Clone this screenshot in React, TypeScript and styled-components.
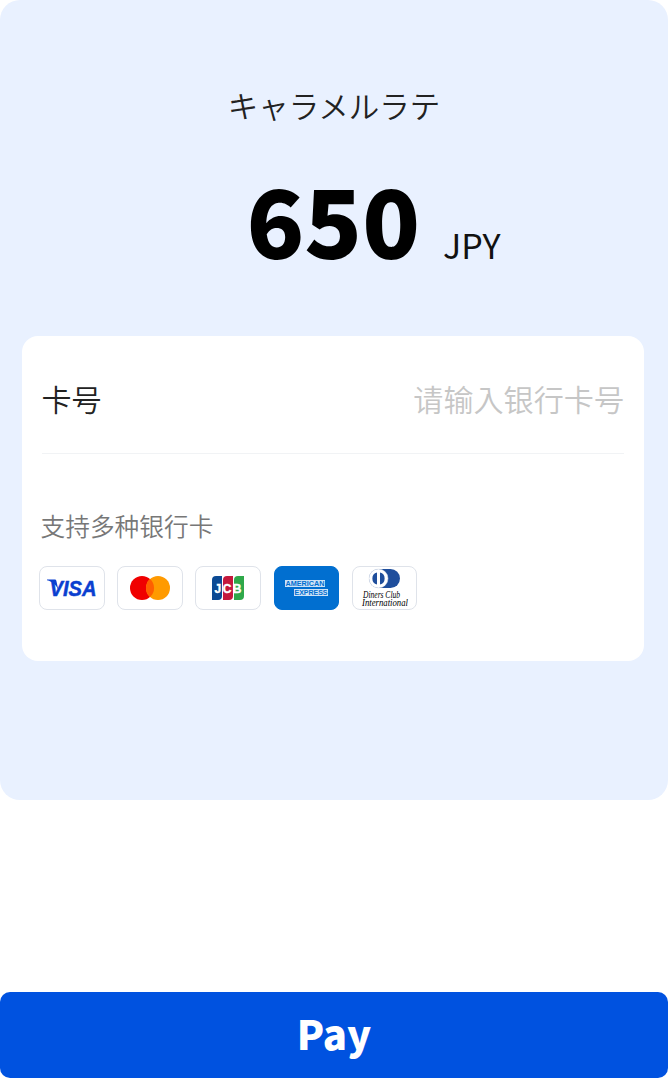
import React from "react";
import styled, { createGlobalStyle } from "styled-components";

const Global = createGlobalStyle`
  html, body { margin: 0; padding: 0; background: #fff; }
  body { font-family: "Noto Sans CJK JP", "Noto Sans CJK SC", "Noto Sans", sans-serif; }
`;
const Page = styled.div`
  width: 668px; height: 1078px; display: flex; flex-direction: column; overflow: hidden;
`;
const Hero = styled.section`
  height: 800px; box-sizing: border-box; background: #e9f1ff; border-radius: 20px;
  padding: 82px 24px 0 22px; display: flex; flex-direction: column; align-items: stretch;
`;
const Title = styled.div`
  font-size: 30.5px; font-weight: 350; line-height: 46px; color: #222; text-align: center; padding-left: 2px;
`;
const AmountRow = styled.div`
  margin-top: 36px; display: flex; justify-content: center; align-items: baseline; gap: 23px; height: 114px; line-height: 108px; padding-left: 81px;
`;
const Amount = styled.span`
  font-size: 95px; font-weight: 900; color: #000;
`;
const Currency = styled.span`
  font-size: 34px; font-weight: 400; color: #111;
`;
const Card = styled.div`
  margin-top: 58px; height: 325px; box-sizing: border-box; background: #fff; border-radius: 16px; padding: 0 20px 0 19.5px;
`;
const Row = styled.div`
  height: 118px; padding-top: 6px; display: flex; align-items: center; justify-content: space-between; border-bottom: 1px solid #f1f3f5; box-sizing: border-box;
`;
const Label = styled.span`
  font-size: 30px; font-weight: 350; color: #222;
`;
const Placeholder = styled.span`
  font-size: 30.1px; font-weight: 350; color: #c6c6c6;
`;
const Support = styled.div`
  margin-top: 53px; font-size: 24.7px; font-weight: 350; line-height: 36px; color: #777; margin-left: -1px;
`;
const Brands = styled.div`
  margin-top: 23px; margin-left: -2.5px; display: flex; gap: 12.6px;
`;
const Brand = styled.div<{ $fill?: string }>`
  width: 65.6px; height: 44px; box-sizing: border-box; border-radius: 8px;
  border: 1px solid ${p => p.$fill ?? "#dfe3ea"}; background: ${p => p.$fill ?? "#fff"};
  display: flex; align-items: center; justify-content: center;
  svg { display: block; overflow: visible; }
`;
const Spacer = styled.div`
  flex: 1;
`;
const PayButton = styled.button`
  height: 86px; border: 0; border-radius: 10px; background: #0052e0; color: #fff;
  font: 900 40px/76px "Noto Sans CJK JP", sans-serif; width: 100%; padding: 0 0 4px;
`;

const Visa = () => (
  <svg width="50" height="20" viewBox="0 0 50 20">
    <path d="M0 1.500h7.500c1 0 1.700.5 1.900 1.400l2.200 10C10 7.500 5.500 3.500 0 2.300z" fill="#0a3fd0" />
    <text x="26" y="18" textAnchor="middle" fontFamily="Liberation Sans" fontWeight="700" fontStyle="italic" fontSize="22" fill="#0a3fd0" stroke="#0a3fd0" strokeWidth="0.5" textLength="47" lengthAdjust="spacingAndGlyphs">VISA</text>
  </svg>
);
const Master = () => (
  <svg width="40" height="24" viewBox="0 0 40 24">
    <circle cx="12" cy="12" r="12" fill="#f00000" />
    <circle cx="28" cy="12" r="12" fill="#ff9a00" />
    <path d="M20 3a12 12 0 0 1 0 18a12 12 0 0 1 0-18z" fill="#ff5f00" />
  </svg>
);
const Jcb = () => (
  <svg width="32" height="24" viewBox="0 0 32 24">
    <path d="M0 4a4 4 0 0 1 4-4h6v20a4 4 0 0 1-4 4H0z" fill="#0b4a94" />
    <path d="M11 4a4 4 0 0 1 4-4h6v20a4 4 0 0 1-4 4h-6z" fill="#c4183c" />
    <path d="M22 4a4 4 0 0 1 4-4h6v20a4 4 0 0 1-4 4h-6z" fill="#2fa84a" />
    <text x="16" y="16.500" textAnchor="middle" fontFamily="Liberation Sans" fontWeight="700" fontSize="12" fill="#fff" stroke="#fff" strokeWidth="0.4" textLength="27" lengthAdjust="spacing">JCB</text>
  </svg>
);
const Amex = () => (
  <svg width="44" height="18" viewBox="-1 0 44 18">
    <rect x="0" y="1" width="40" height="7" fill="#fff" fillOpacity="0.8" />
    <rect x="9" y="10" width="34" height="7" fill="#fff" fillOpacity="0.8" />
    <text x="20" y="7.400" textAnchor="middle" fontFamily="Liberation Sans" fontWeight="700" fontSize="7" fill="#016fd0" textLength="39" lengthAdjust="spacingAndGlyphs">AMERICAN</text>
    <text x="26" y="16.400" textAnchor="middle" fontFamily="Liberation Sans" fontWeight="700" fontSize="7" fill="#016fd0" textLength="33" lengthAdjust="spacingAndGlyphs">EXPRESS</text>
  </svg>
);
const Diners = () => (
  <svg width="48" height="38" viewBox="0 0 48 38">
    <rect x="8" y="0" width="31" height="19" rx="9.500" fill="#1f4e9c" />
    <circle cx="17.500" cy="9.500" r="9.500" fill="#fff" stroke="#dfe3ea" strokeWidth="0.5" />
    <path d="M16 3.500a6.200 6.200 0 0 0 0 12zM19 3.500a6.200 6.200 0 0 1 0 12z" fill="#1f4e9c" />
    <text x="2" y="29" fontFamily="Liberation Serif" fontStyle="italic" fontSize="9.500" fill="#000" textLength="37" lengthAdjust="spacingAndGlyphs">Diners Club</text>
    <text x="1" y="36.500" fontFamily="Liberation Serif" fontStyle="italic" fontSize="9.500" fill="#000" textLength="46" lengthAdjust="spacingAndGlyphs">International</text>
  </svg>
);

export default function App() {
  return (
    <Page>
      <Global />
      <Hero>
        <Title>キャラメルラテ</Title>
        <AmountRow>
          <Amount>650</Amount>
          <Currency>JPY</Currency>
        </AmountRow>
        <Card>
          <Row>
            <Label>卡号</Label>
            <Placeholder>请输入银行卡号</Placeholder>
          </Row>
          <Support lang="zh-CN">支持多种银行卡</Support>
          <Brands>
            <Brand><Visa /></Brand>
            <Brand><Master /></Brand>
            <Brand><Jcb /></Brand>
            <Brand $fill="#016fd0"><Amex /></Brand>
            <Brand><Diners /></Brand>
          </Brands>
        </Card>
      </Hero>
      <Spacer />
      <PayButton>Pay</PayButton>
    </Page>
  );
}
